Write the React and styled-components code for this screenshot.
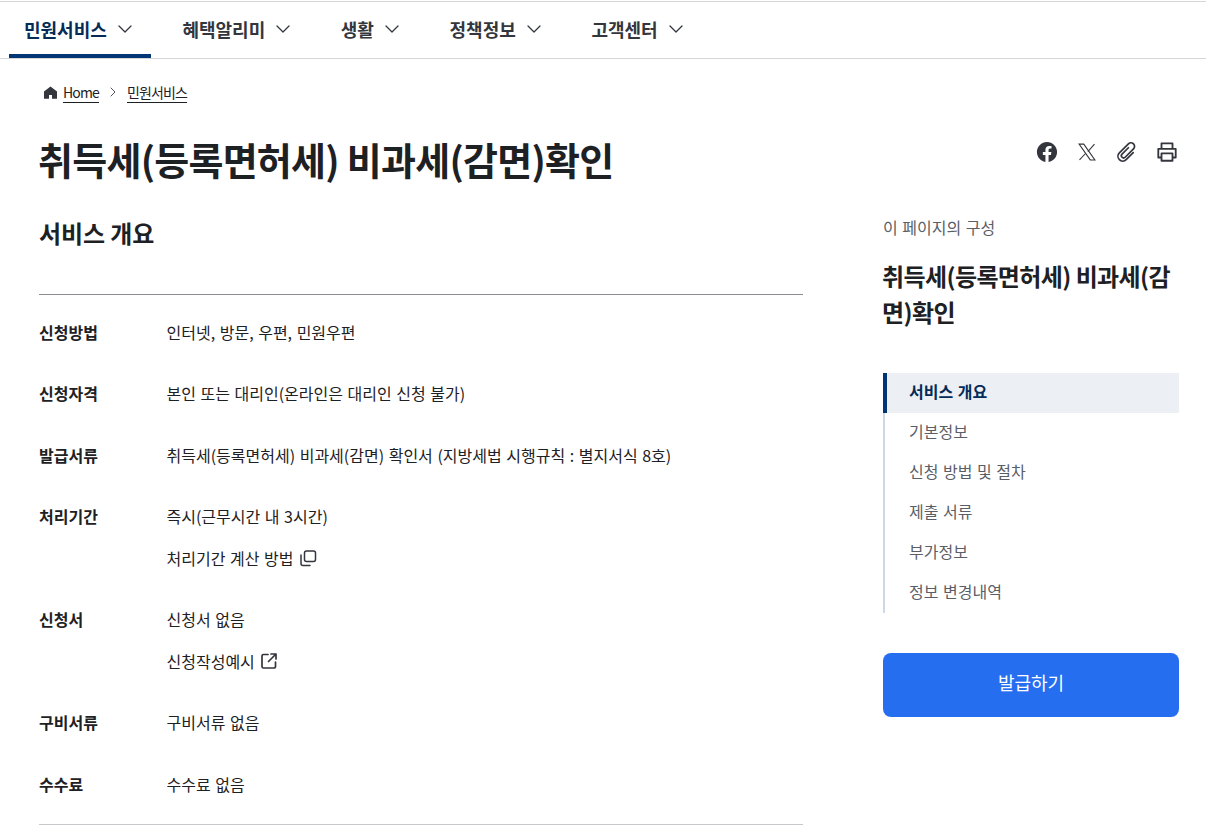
import styled, { createGlobalStyle } from 'styled-components';
import { ChevronDown, ChevronRight } from 'lucide-react';

const GlobalStyle = createGlobalStyle`
  html, body {
    margin: 0;
    padding: 0;
    background: #fff;
    overflow: hidden;
  }
  body {
    font-family: "Noto Sans CJK KR", "Noto Sans", sans-serif;
    color: #1e2124;
  }
  * { box-sizing: border-box; }
`;

const Page = styled.div`
  width: 1206px;
  height: 835px;
  overflow: hidden;
`;

const Nav = styled.nav`
  height: 58px;
  display: flex;
  gap: 16px;
  padding-left: 9px;
  border-top: 1px solid #d6d6d6;
  margin-top: 1px;
  border-bottom: 1px solid #d6d6d6;
`;

const NavItem = styled.a`
  height: 56px;
  display: flex;
  align-items: center;
  gap: 6px;
  padding: 2px 14.6px 0 15px;
  font-size: 18px;
  font-weight: 700;
  color: ${({ $active }) => ($active ? '#052b57' : '#33363d')};
  border-bottom: 4px solid ${({ $active }) => ($active ? '#003675' : 'transparent')};
`;

const Main = styled.div`
  padding: 0 27px 0 39px;
`;

const Crumbs = styled.div`
  height: 66px;
  padding: 0 0 0 5px;
  display: flex;
  align-items: center;
  gap: 6px;
  font-size: 14px;
  letter-spacing: -0.85px;
  color: #1e2124;
`;

const CrumbLink = styled.a`
  display: flex;
  align-items: center;
  line-height: 20px;
  border-bottom: 1px solid #1e2124;
`;

const HeadRow = styled.div`
  display: flex;
  justify-content: space-between;
  align-items: flex-start;
  height: 89px;
  padding-top: 6px;
`;

const Title = styled.h1`
  margin: 0 0 0 -1px;
  font-size: 38px;
  line-height: 56px;
  font-weight: 700;
  letter-spacing: -0.75px;
  color: #1e2124;
`;

const Share = styled.div`
  display: flex;
  gap: 16px;
  padding-top: 9px;
`;

const ShareButton = styled.span`
  width: 24px;
  height: 24px;
  display: flex;
  align-items: center;
  justify-content: center;
  color: #33363d;
`;

const Columns = styled.div`
  display: flex;
  justify-content: space-between;
`;

const Content = styled.section`
  width: 764px;
`;

const SectionTitle = styled.h2`
  margin: 0;
  height: 81px;
  padding-top: 1px;
  font-size: 24px;
  line-height: 36px;
  font-weight: 700;
  letter-spacing: -0.1px;
  border-bottom: 1px solid #8a8d94;
`;

const Table = styled.dl`
  margin: 0;
  padding: 19px 0 0;
  border-bottom: 1px solid #c6c8cc;
`;

const Row = styled.div`
  display: flex;
  padding-bottom: 25.3px;
  &:last-child {
    padding-bottom: 22px;
  }
`;

const Label = styled.dt`
  width: 127.5px;
  font-size: 16px;
  line-height: 36px;
  font-weight: 700;
`;

const Value = styled.dd`
  margin: 0;
  font-size: 16px;
  line-height: 36px;
  word-spacing: 1px;
  color: #1e2124;
`;

const ValueLine = styled.div`
  display: flex;
  align-items: center;
  gap: 5.5px;
  & + & {
    margin-top: 6px;
  }
`;

const Aside = styled.aside`
  width: 296px;
  padding-top: 1px;
`;

const AsideCaption = styled.div`
  font-size: 16px;
  line-height: 24px;
  color: #5a5e66;
  word-spacing: 1px;
`;

const AsideTitle = styled.div`
  margin: 19px 0 0 -1px;
  font-size: 24px;
  line-height: 36px;
  font-weight: 700;
  letter-spacing: -0.6px;
`;

const Toc = styled.ul`
  list-style: none;
  margin: 43px 0 0;
  padding: 0;
  border-left: 2px solid #cdd8e4;
`;

const TocItem = styled.li`
  height: 40px;
  display: flex;
  align-items: center;
  margin-left: -2px;
  padding: 0 0 4px 22px;
  font-size: 16px;
  word-spacing: 1px;
  font-weight: ${({ $active }) => ($active ? 700 : 400)};
  color: ${({ $active }) => ($active ? '#052b57' : '#5a5e66')};
  background: ${({ $active }) => ($active ? '#ecf0f5' : 'transparent')};
  border-left: 4px solid ${({ $active }) => ($active ? '#003675' : 'transparent')};
`;

const IssueButton = styled.button`
  width: 100%;
  height: 64px;
  margin-top: 40px;
  padding: 0 0 7px;
  border: 0;
  border-radius: 8px;
  background: #256ef0;
  color: #fff;
  font-family: inherit;
  font-size: 18px;
  font-weight: 400;
`;

const FacebookIcon = () => (
  <svg width="22" height="22" viewBox="0 0 24 24" fill="currentColor">
    <path d="M23 12.07C23 5.95 18.08 1 12 1S1 5.95 1 12.07c0 5.52 4.02 10.1 9.28 10.93v-7.73H7.49v-3.2h2.79V9.64c0-2.77 1.64-4.3 4.15-4.3 1.2 0 2.46.22 2.46.22v2.72h-1.39c-1.36 0-1.79.85-1.79 1.73v2.06h3.05l-.49 3.2h-2.56V23C18.98 22.17 23 17.59 23 12.07z" />
  </svg>
);

const XIcon = () => (
  <svg width="20" height="20" viewBox="0 0 24 24" fill="none" stroke="currentColor" strokeWidth="1.3">
    <path d="M2.5 2.5h5.6l13.4 19h-5.6z" />
    <path d="M21 2.5l-8 9M10.5 13.5L3 21.5" />
  </svg>
);

const ClipIcon = () => (
  <svg width="24" height="24" viewBox="0 0 24 24" fill="none" stroke="currentColor" strokeWidth="1.7" strokeLinecap="round" strokeLinejoin="round">
    <path transform="rotate(45 12 12)" d="M10 8v9a2.2 2.2 0 0 0 4.4 0V5.2a3.6 3.6 0 0 0-7.2 0V18a4.8 4.8 0 0 0 9.6 0V8" />
  </svg>
);

const PrintIcon = () => (
  <svg width="22" height="22" viewBox="0 0 24 24" fill="none" stroke="currentColor" strokeWidth="2" strokeLinejoin="round">
    <path d="M6 8V2.5h12V8" />
    <path d="M6 18H2.5V8.5h19V18H18" />
    <path d="M6 13.5h12v8H6z" />
  </svg>
);

const HomeIcon = () => (
  <svg width="13" height="14" viewBox="0 0 13 14" fill="#33363d">
    <path d="M6.5 1.5L0 6.6v7.2h5V10h3v3.8h5V6.6z" />
  </svg>
);

const CopyIcon = () => (
  <svg width="18" height="18" viewBox="0 0 18 18" fill="none" stroke="#33363d" strokeWidth="1.5" strokeLinecap="round" strokeLinejoin="round">
    <rect x="5.5" y="2" width="11" height="10.5" rx="2" />
    <path d="M2 6v8.5A2 2 0 0 0 4 16.5h7" />
  </svg>
);

const ExternalIcon = () => (
  <svg width="18" height="18" viewBox="0 0 18 18" fill="none" stroke="#33363d" strokeWidth="1.7" strokeLinecap="round" strokeLinejoin="round">
    <path d="M8 2.5H3.5a1.5 1.5 0 0 0-1.5 1.5v10.5A1.5 1.5 0 0 0 3.5 16H14a1.5 1.5 0 0 0 1.5-1.5V10" />
    <path d="M11 2h5v5M16 2L8.5 9.5" />
  </svg>
);

const navItems = ['민원서비스', '혜택알리미', '생활', '정책정보', '고객센터'];
const tocItems = ['서비스 개요', '기본정보', '신청 방법 및 절차', '제출 서류', '부가정보', '정보 변경내역'];

const App = () => (
  <Page>
    <GlobalStyle />
    <Nav>
      {navItems.map((item, i) => (
        <NavItem key={item} $active={i === 0}>
          {item}
          <ChevronDown size={24} strokeWidth={1.3} color="#33363d" />
        </NavItem>
      ))}
    </Nav>
    <Main>
      <Crumbs>
        <HomeIcon />
        <CrumbLink>Home</CrumbLink>
        <ChevronRight size={16} strokeWidth={1.3} color="#33363d" />
        <CrumbLink>민원서비스</CrumbLink>
      </Crumbs>
      <HeadRow>
        <Title>취득세(등록면허세) 비과세(감면)확인</Title>
        <Share>
          <ShareButton><FacebookIcon /></ShareButton>
          <ShareButton><XIcon /></ShareButton>
          <ShareButton><ClipIcon /></ShareButton>
          <ShareButton><PrintIcon /></ShareButton>
        </Share>
      </HeadRow>
      <Columns>
        <Content>
          <SectionTitle>서비스 개요</SectionTitle>
          <Table>
            <Row>
              <Label>신청방법</Label>
              <Value>인터넷, 방문, 우편, 민원우편</Value>
            </Row>
            <Row>
              <Label>신청자격</Label>
              <Value>본인 또는 대리인(온라인은 대리인 신청 불가)</Value>
            </Row>
            <Row>
              <Label>발급서류</Label>
              <Value>취득세(등록면허세) 비과세(감면) 확인서 (지방세법 시행규칙 : 별지서식 8호)</Value>
            </Row>
            <Row>
              <Label>처리기간</Label>
              <Value>
                <ValueLine>즉시(근무시간 내 3시간)</ValueLine>
                <ValueLine>처리기간 계산 방법 <CopyIcon /></ValueLine>
              </Value>
            </Row>
            <Row>
              <Label>신청서</Label>
              <Value>
                <ValueLine>신청서 없음</ValueLine>
                <ValueLine>신청작성예시 <ExternalIcon /></ValueLine>
              </Value>
            </Row>
            <Row>
              <Label>구비서류</Label>
              <Value>구비서류 없음</Value>
            </Row>
            <Row>
              <Label>수수료</Label>
              <Value>수수료 없음</Value>
            </Row>
          </Table>
        </Content>
        <Aside>
          <AsideCaption>이 페이지의 구성</AsideCaption>
          <AsideTitle>취득세(등록면허세) 비과세(감면)확인</AsideTitle>
          <Toc>
            {tocItems.map((item, i) => (
              <TocItem key={item} $active={i === 0}>{item}</TocItem>
            ))}
          </Toc>
          <IssueButton>발급하기</IssueButton>
        </Aside>
      </Columns>
    </Main>
  </Page>
);

export default App;
